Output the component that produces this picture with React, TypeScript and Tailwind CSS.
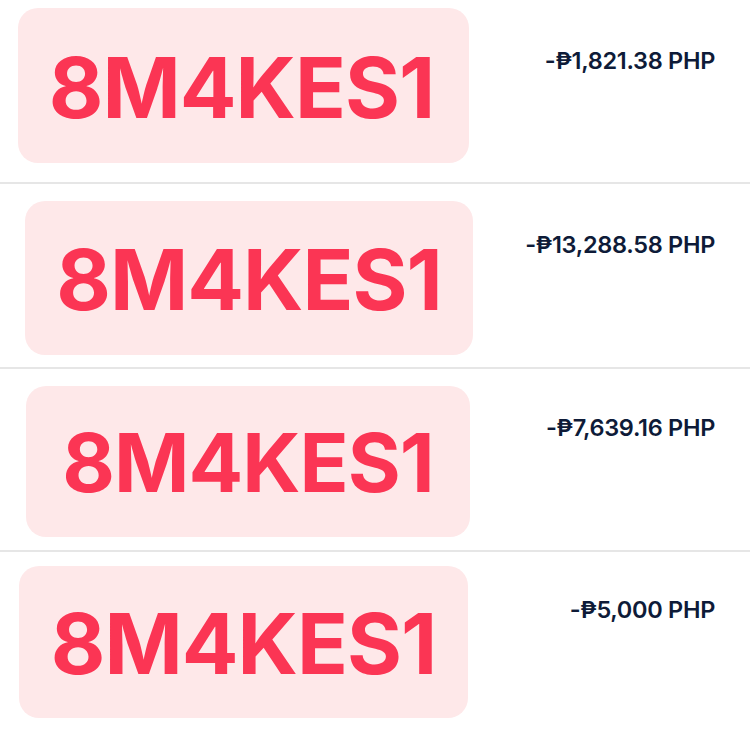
import React from "react";

type Row = {
  amount: string;
  rowCls: string;
  boxCls: string;
  txtCls: string;
  amtCls: string;
};

const rows: Row[] = [
  { amount: "-₱1,821.38 PHP", rowCls: "h-[182px]", boxCls: "ml-[18px] mt-[8px] w-[451px] h-[155px] pt-[4px] pr-[4px]", txtCls: "text-[84px] tracking-[-1px]", amtCls: "mt-[47px]" },
  { amount: "-₱13,288.58 PHP", rowCls: "h-[183px]", boxCls: "ml-[25px] mt-[17px] w-[448px] h-[154px] pt-[4px]", txtCls: "text-[84px] tracking-[-1px]", amtCls: "mt-[47px]" },
  { amount: "-₱7,639.16 PHP", rowCls: "h-[181px]", boxCls: "ml-[26px] mt-[17px] w-[444px] h-[151px] pt-[4px]", txtCls: "text-[81px] tracking-[-1px]", amtCls: "mt-[45px]" },
  { amount: "-₱5,000 PHP", rowCls: "h-[179px]", boxCls: "ml-[19px] mt-[14px] w-[449px] h-[152px] pt-[4px]", txtCls: "text-[84px] tracking-[-1px]", amtCls: "mt-[44px]" },
];

export default function App() {
  return (
    <div className="w-[750px] h-[731px] bg-white overflow-hidden" style={{ fontFamily: "Inter, 'Liberation Sans', sans-serif" }}>
      {rows.map((r, i) => (
        <div key={i}>
          <div className={`flex justify-between items-start ${r.rowCls}`}>
            <div className={`flex items-center justify-center rounded-[20px] bg-[#fee8e9] ${r.boxCls}`}>
              <span className={`leading-none font-bold text-[#fb3554] ${r.txtCls}`}>8M4KES1</span>
            </div>
            <div className={`mr-[35px] text-[23.5px] leading-[28px] font-semibold tracking-[-0.3px] text-[#0e1b38] ${r.amtCls}`}>{r.amount}</div>
          </div>
          {i < rows.length - 1 && <div className="h-[2px] bg-[#e6e6e6]" />}
        </div>
      ))}
    </div>
  );
}
